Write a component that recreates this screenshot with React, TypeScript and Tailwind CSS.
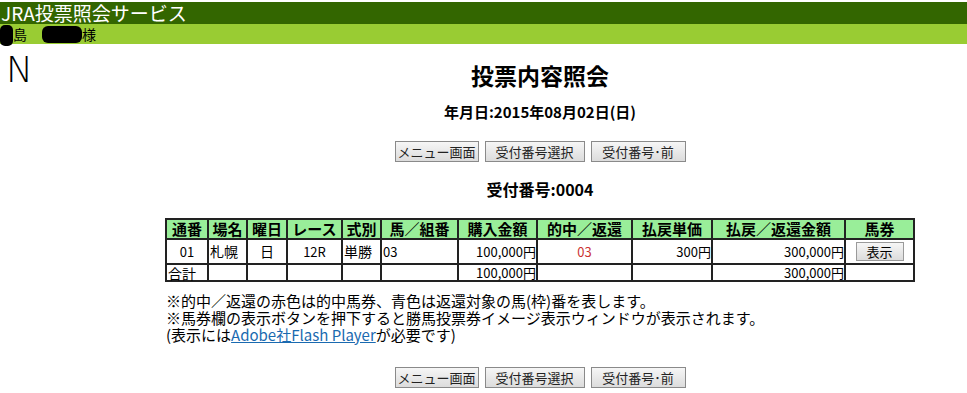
import { ReactNode } from "react";

const font = "[font-family:'Noto_Sans_CJK_JP','Noto_Sans',sans-serif]";

function NavButton({ children, className = "" }: { children: ReactNode; className?: string }) {
  return (
    <button
      type="button"
      className={`h-[21px] border border-[#8a8a8a] bg-gradient-to-b from-[#f6f6f6] to-[#dcdcdc] text-[13px] leading-none text-[#222] ${className}`}
    >
      {children}
    </button>
  );
}

function NavButtons() {
  return (
    <div className="flex justify-center gap-[6px]">
      <NavButton className="w-[84px]">メニュー画面</NavButton>
      <NavButton className="w-[100px]">受付番号選択</NavButton>
      <NavButton className="w-[95px]">受付番号･前</NavButton>
    </div>
  );
}

const headers = [
  "通番",
  "場名",
  "曜日",
  "レース",
  "式別",
  "馬／組番",
  "購入金額",
  "的中／返還",
  "払戻単価",
  "払戻／返還金額",
  "馬券",
];
const widths = [42, 39, 40, 55, 39, 77, 79, 95, 80, 133, 69];

export default function App() {
  return (
    <div className={`min-h-[393px] w-[967px] bg-white pt-[2px] text-black ${font}`}>
      {/* header bars */}
      <div className="h-[22px] bg-[#336600] pl-[1px] text-[19px] leading-[22px] text-white">
        JRA投票照会サービス
      </div>
      <div className="relative h-[20px] bg-[#99cc33] text-[14px] leading-[20px]">
        <span className="absolute left-0 top-[1px] h-[21px] w-[13px] rounded-[5px] bg-black" />
        <span className="pl-[13px]">島</span>
        <span className="absolute left-[42px] top-[2px] h-[17px] w-[40px] rounded-[6px] bg-black" />
        <span className="pl-[55px]">様</span>
      </div>

      <div className="flex">
        <div className="w-[113px] shrink-0 pl-[6px] pt-[8px]">
          <span className="text-[36px] font-light leading-none [font-family:'DejaVu_Sans',sans-serif]">N</span>
        </div>

        <div className="flex-1 pt-[18px]">
          <h1 className="text-center text-[23px] font-bold leading-[27px]">投票内容照会</h1>
          <p className="mt-[13px] text-center text-[15px] font-bold leading-[20px]">
            年月日:2015年08月02日(日)
          </p>
          <div className="mt-[19px]">
            <NavButtons />
          </div>
          <p className="mt-[17px] text-center text-[16px] font-bold leading-[21px]">受付番号:0004</p>

          <table className="mx-auto mt-[18px] w-[748px] table-fixed border-collapse border-2 border-[#222] text-[13px]">
            <colgroup>
              {widths.map((w, i) => (
                <col key={i} style={{ width: w }} />
              ))}
            </colgroup>
            <thead>
              <tr className="h-[20px] bg-[#99ee99]">
                {headers.map((h) => (
                  <th
                    key={h}
                    className="overflow-hidden whitespace-nowrap border-2 border-[#222] p-0 text-center text-[15px] font-bold leading-[16px]"
                  >
                    {h}
                  </th>
                ))}
              </tr>
            </thead>
            <tbody>
              <tr className="h-[25px]">
                <td className="border-2 border-[#222] text-center">01</td>
                <td className="border-2 border-[#222] px-[1px] text-[14px]">札幌</td>
                <td className="border-2 border-[#222] text-center text-[14px]">日</td>
                <td className="border-2 border-[#222] text-center">12R</td>
                <td className="border-2 border-[#222] px-[1px] text-[14px]">単勝</td>
                <td className="border-2 border-[#222] px-[1px]">03</td>
                <td className="border-2 border-[#222] text-right">100,000円</td>
                <td className="border-2 border-[#222] text-center text-[#cc3333]">03</td>
                <td className="border-2 border-[#222] text-right">300円</td>
                <td className="border-2 border-[#222] text-right">300,000円</td>
                <td className="border-2 border-[#222] text-center">
                  <button
                    type="button"
                    className="h-[19px] w-[48px] border border-[#9a9a9a] bg-gradient-to-b from-[#f6f6f6] to-[#dcdcdc] text-[13px] leading-none"
                  >
                    表示
                  </button>
                </td>
              </tr>
              <tr className="h-[17px] leading-[14px]">
                <td className="border-2 border-[#222] px-[1px] text-[14px]">合計</td>
                <td className="border-2 border-[#222]" />
                <td className="border-2 border-[#222]" />
                <td className="border-2 border-[#222]" />
                <td className="border-2 border-[#222]" />
                <td className="border-2 border-[#222]" />
                <td className="border-2 border-[#222] text-right">100,000円</td>
                <td className="border-2 border-[#222]" />
                <td className="border-2 border-[#222]" />
                <td className="border-2 border-[#222] text-right">300,000円</td>
                <td className="border-2 border-[#222]" />
              </tr>
            </tbody>
          </table>

          <div className="mx-auto mt-[10px] w-[748px] text-[15px] leading-[17px]">
            <p>※的中／返還の赤色は的中馬券、青色は返還対象の馬(枠)番を表します。</p>
            <p>※馬券欄の表示ボタンを押下すると勝馬投票券イメージ表示ウィンドウが表示されます。</p>
            <p>
              (表示には
              <a href="#" className="text-[#1a6ab0] underline">
                Adobe社Flash Player
              </a>
              が必要です)
            </p>
          </div>

          <div className="mt-[24px] pb-[3px]">
            <NavButtons />
          </div>
        </div>
      </div>
    </div>
  );
}
